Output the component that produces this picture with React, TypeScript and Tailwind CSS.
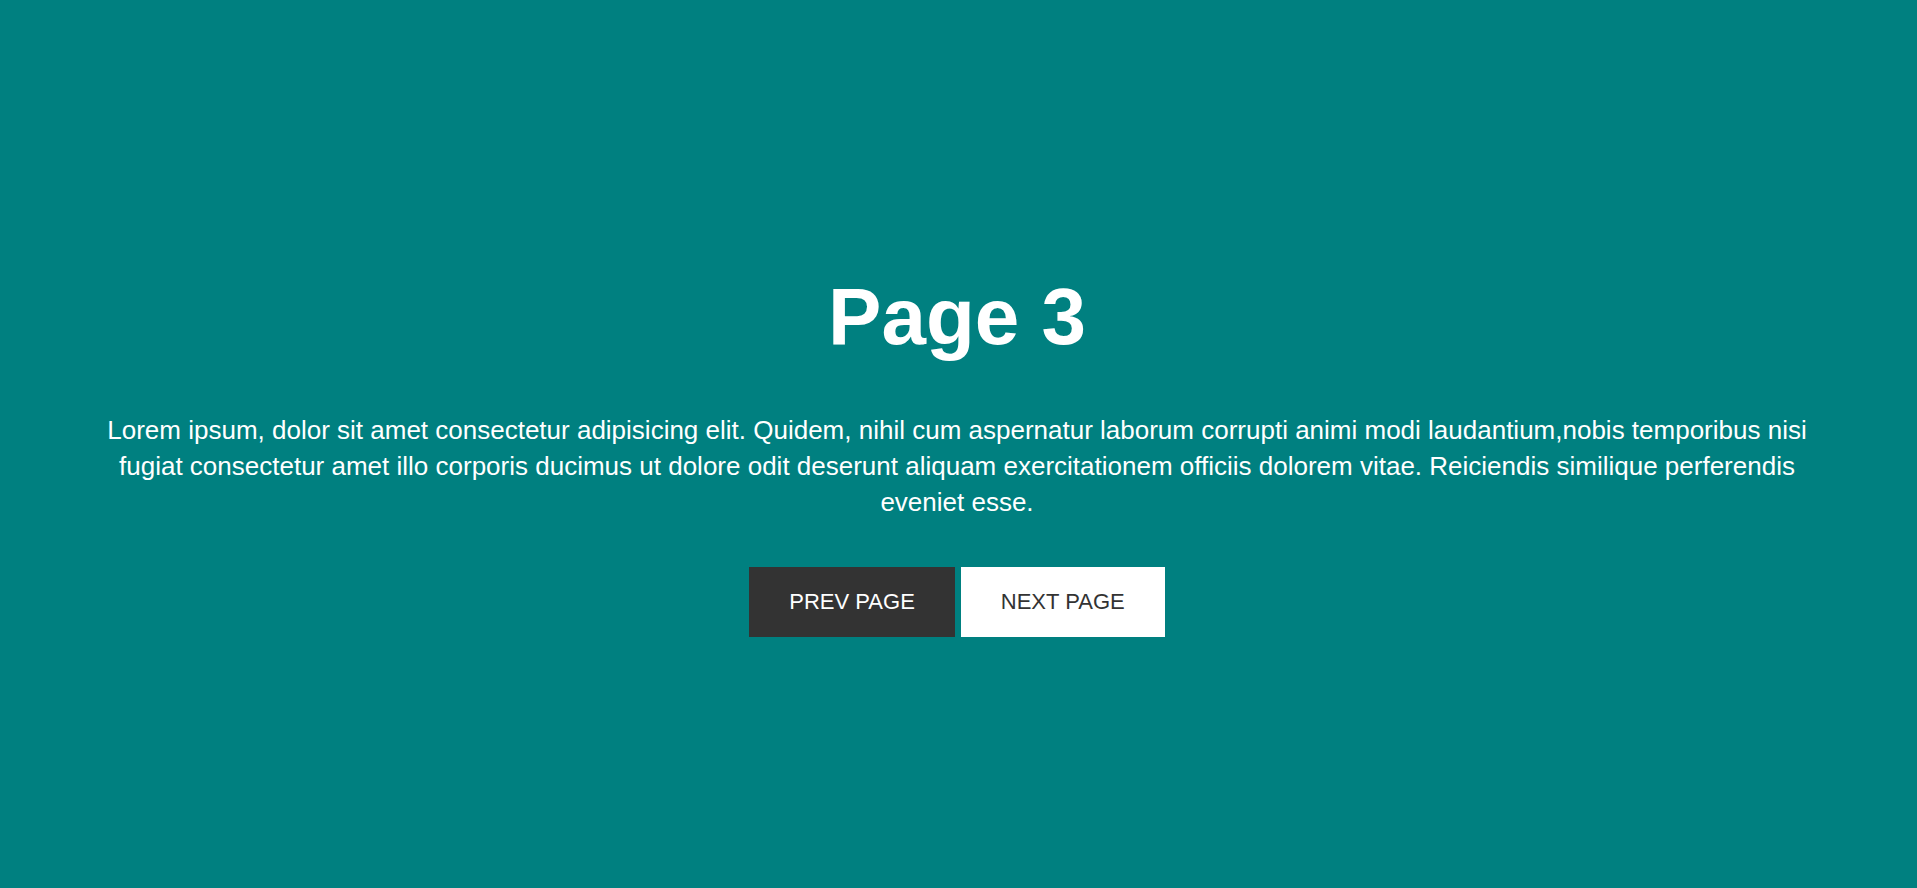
export default function App() {
  return (
    <main className="flex min-h-screen flex-col items-center justify-center bg-[#008080] pt-[9px] pr-[100px] pl-[97px] text-center font-['Liberation_Sans',Arial,sans-serif] text-white">
      <h1 className="mb-[39px] text-[80px] leading-[112px] font-bold">Page 3</h1>
      <p className="mb-[47px] text-[26px] leading-[36px]">
        Lorem ipsum, dolor sit amet consectetur adipisicing elit. Quidem, nihil cum aspernatur laborum corrupti animi modi
        laudantium,nobis temporibus nisi fugiat consectetur amet illo corporis ducimus ut dolore odit deserunt aliquam
        exercitationem officiis dolorem vitae. Reiciendis similique perferendis eveniet esse.
      </p>
      <nav className="flex gap-[6px] text-[22px] leading-[30px]">
        <a href="#prev" className="bg-[#333333] px-[40px] py-[20px] text-white">PREV PAGE</a>
        <a href="#next" className="bg-white px-[40px] py-[20px] text-[#333333]">NEXT PAGE</a>
      </nav>
    </main>
  );
}
